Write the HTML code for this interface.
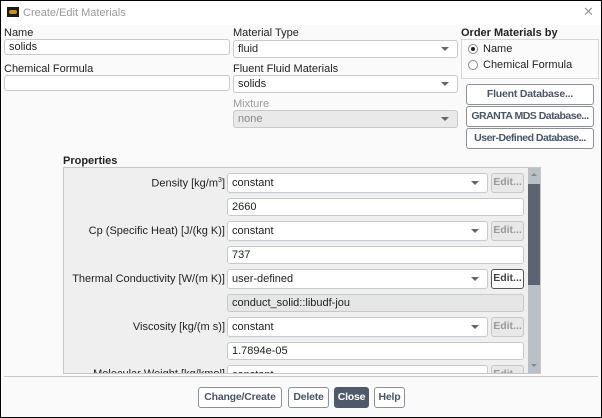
<!DOCTYPE html>
<html><head><style>
*{box-sizing:border-box;margin:0;padding:0}
body{width:602px;height:418px;overflow:hidden;background:#000;font-family:"Liberation Sans",Tahoma,sans-serif;font-size:11px;color:#222}
#w{position:absolute;left:1px;top:1px;width:600px;height:416px;background:#fafafa;overflow:hidden}
.a{position:absolute}
.lbl{position:absolute;font-size:11px;line-height:13px;white-space:nowrap}
.in{position:absolute;background:#fff;border:1px solid #c6c9ce;border-radius:3px;padding-left:4px;line-height:14px;font-size:11px;white-space:nowrap}
.dd::after{content:"";position:absolute;right:8px;top:50%;margin-top:-2px;border-left:4px solid transparent;border-right:4px solid transparent;border-top:4px solid #666}
.dis{background:#e9e9e9;color:#888}
.btn{position:absolute;background:#fff;border:1px solid #8c9098;border-radius:3px;font-weight:bold;color:#4a5566;text-align:center;font-size:10.5px;letter-spacing:-0.2px;white-space:nowrap;overflow:hidden}
.eb{position:absolute;background:#e8e8e8;border:1px solid #c8c8c8;border-radius:3px;color:#999;font-weight:bold;text-align:center;font-size:10.5px;line-height:17px;width:33px;height:20px}
.rl{position:absolute;font-size:11px;white-space:nowrap}
</style></head><body><div id="w">
<div class="a" style="left:0;top:0;width:600px;height:24px;background:#fff"></div>
<div class="a" style="left:6px;top:6px;width:12px;height:10px;background:#1a1a1a"><div style="position:absolute;left:2px;top:3px;width:8px;height:4px;background:#c8901c;border-radius:2px"></div></div>
<div class="lbl" style="left:22px;top:6px;color:#999">Create/Edit Materials</div>
<div class="lbl" style="left:582px;top:4px;color:#999;font-size:13px">✕</div>

<div class="lbl" style="left:3px;top:26px">Name</div>
<div class="in" style="left:3px;top:38px;width:226px;height:16px">solids</div>
<div class="lbl" style="left:3px;top:62px">Chemical Formula</div>
<div class="in" style="left:3px;top:74px;width:226px;height:16px"></div>

<div class="lbl" style="left:232px;top:26px">Material Type</div>
<div class="in dd" style="left:232px;top:39px;width:225px;height:18px;line-height:16px">fluid</div>
<div class="lbl" style="left:232px;top:62px">Fluent Fluid Materials</div>
<div class="in dd" style="left:232px;top:74px;width:225px;height:18px;line-height:16px">solids</div>
<div class="lbl" style="left:232px;top:97px;color:#999">Mixture</div>
<div class="in dd dis" style="left:232px;top:109px;width:225px;height:18px;line-height:16px">none</div>

<div class="lbl" style="left:460px;top:26px;font-weight:bold">Order Materials by</div>
<div class="a" style="left:460px;top:38px;width:138px;height:40px;border:1px solid #d4d6da;background:#fbfbfb"></div>
<div class="a" style="left:467px;top:43px;width:10px;height:10px;border:1px solid #888;border-radius:50%;background:#fff"><div style="position:absolute;left:2px;top:2px;width:4px;height:4px;border-radius:50%;background:#222"></div></div>
<div class="lbl" style="left:482px;top:42px">Name</div>
<div class="a" style="left:467px;top:59px;width:10px;height:10px;border:1px solid #888;border-radius:50%;background:#fff"></div>
<div class="lbl" style="left:482px;top:58px">Chemical Formula</div>

<div class="btn" style="left:465px;top:83px;width:128px;height:21px;line-height:19px">Fluent Database...</div>
<div class="btn" style="left:465px;top:105px;width:128px;height:21px;line-height:19px;letter-spacing:-0.5px">GRANTA MDS Database...</div>
<div class="btn" style="left:465px;top:127px;width:128px;height:21px;line-height:19px;letter-spacing:-0.5px">User-Defined Database...</div>

<div class="lbl" style="left:62px;top:154px;font-weight:bold">Properties</div>
<div class="a" style="left:62px;top:166px;width:478px;height:207px;border:1px solid #c8c8c8;background:#efefef;overflow:hidden">
 <div class="a" style="right:0;top:0;width:12px;height:205px;background:#b9c0c6"></div>
 <div class="a" style="right:0;top:16px;width:12px;height:101px;background:#5b6470"></div>
 <div class="a" style="right:3px;top:5px;border-left:3px solid transparent;border-right:3px solid transparent;border-bottom:3px solid #888"></div>
 <div class="a" style="right:3px;top:196px;border-left:3px solid transparent;border-right:3px solid transparent;border-top:3px solid #888"></div>
</div>
<div class="a" style="left:63px;top:167px;width:463px;height:205px;overflow:hidden">
 <div class="rl" style="top:9px;right:302px">Density [kg/m<sup style="font-size:7px">3</sup>]</div>
 <div class="in dd" style="left:163px;top:5px;width:261px;height:20px;line-height:18px">constant</div>
 <div class="eb" style="left:427px;top:5px">Edit...</div>
 <div class="in" style="left:163px;top:30px;width:297px;height:18px;line-height:16px">2660</div>
 <div class="rl" style="top:57px;right:302px">Cp (Specific Heat) [J/(kg K)]</div>
 <div class="in dd" style="left:163px;top:53px;width:261px;height:20px;line-height:18px">constant</div>
 <div class="eb" style="left:427px;top:53px">Edit...</div>
 <div class="in" style="left:163px;top:78px;width:297px;height:18px;line-height:16px">737</div>
 <div class="rl" style="top:105px;right:302px">Thermal Conductivity [W/(m K)]</div>
 <div class="in dd" style="left:163px;top:101px;width:261px;height:20px;line-height:18px">user-defined</div>
 <div class="eb" style="left:427px;top:101px;background:#fff;border-color:#555;color:#444">Edit...</div>
 <div class="in" style="left:163px;top:126px;width:297px;height:18px;line-height:16px;background:#e6e6e6">conduct_solid::libudf-jou</div>
 <div class="rl" style="top:153px;right:302px">Viscosity [kg/(m s)]</div>
 <div class="in dd" style="left:163px;top:149px;width:261px;height:20px;line-height:18px">constant</div>
 <div class="eb" style="left:427px;top:149px">Edit...</div>
 <div class="in" style="left:163px;top:174px;width:297px;height:18px;line-height:16px">1.7894e-05</div>
 <div class="rl" style="top:200px;right:302px">Molecular Weight [kg/kmol]</div>
 <div class="in dd" style="left:163px;top:197px;width:261px;height:20px;line-height:18px">constant</div>
 <div class="eb" style="left:427px;top:197px">Edit...</div>
</div>

<div class="a" style="left:3px;top:375px;width:594px;height:1px;background:#c8c8c8"></div>
<div class="btn" style="left:197px;top:386px;width:84px;height:21px;line-height:19px">Change/Create</div>
<div class="btn" style="left:287px;top:386px;width:41px;height:21px;line-height:19px">Delete</div>
<div class="btn" style="left:333px;top:386px;width:35px;height:21px;line-height:19px;background:#4e5a6a;border-color:#4e5a6a;color:#fff">Close</div>
<div class="btn" style="left:373px;top:386px;width:31px;height:21px;line-height:19px">Help</div>
</div></body></html>
